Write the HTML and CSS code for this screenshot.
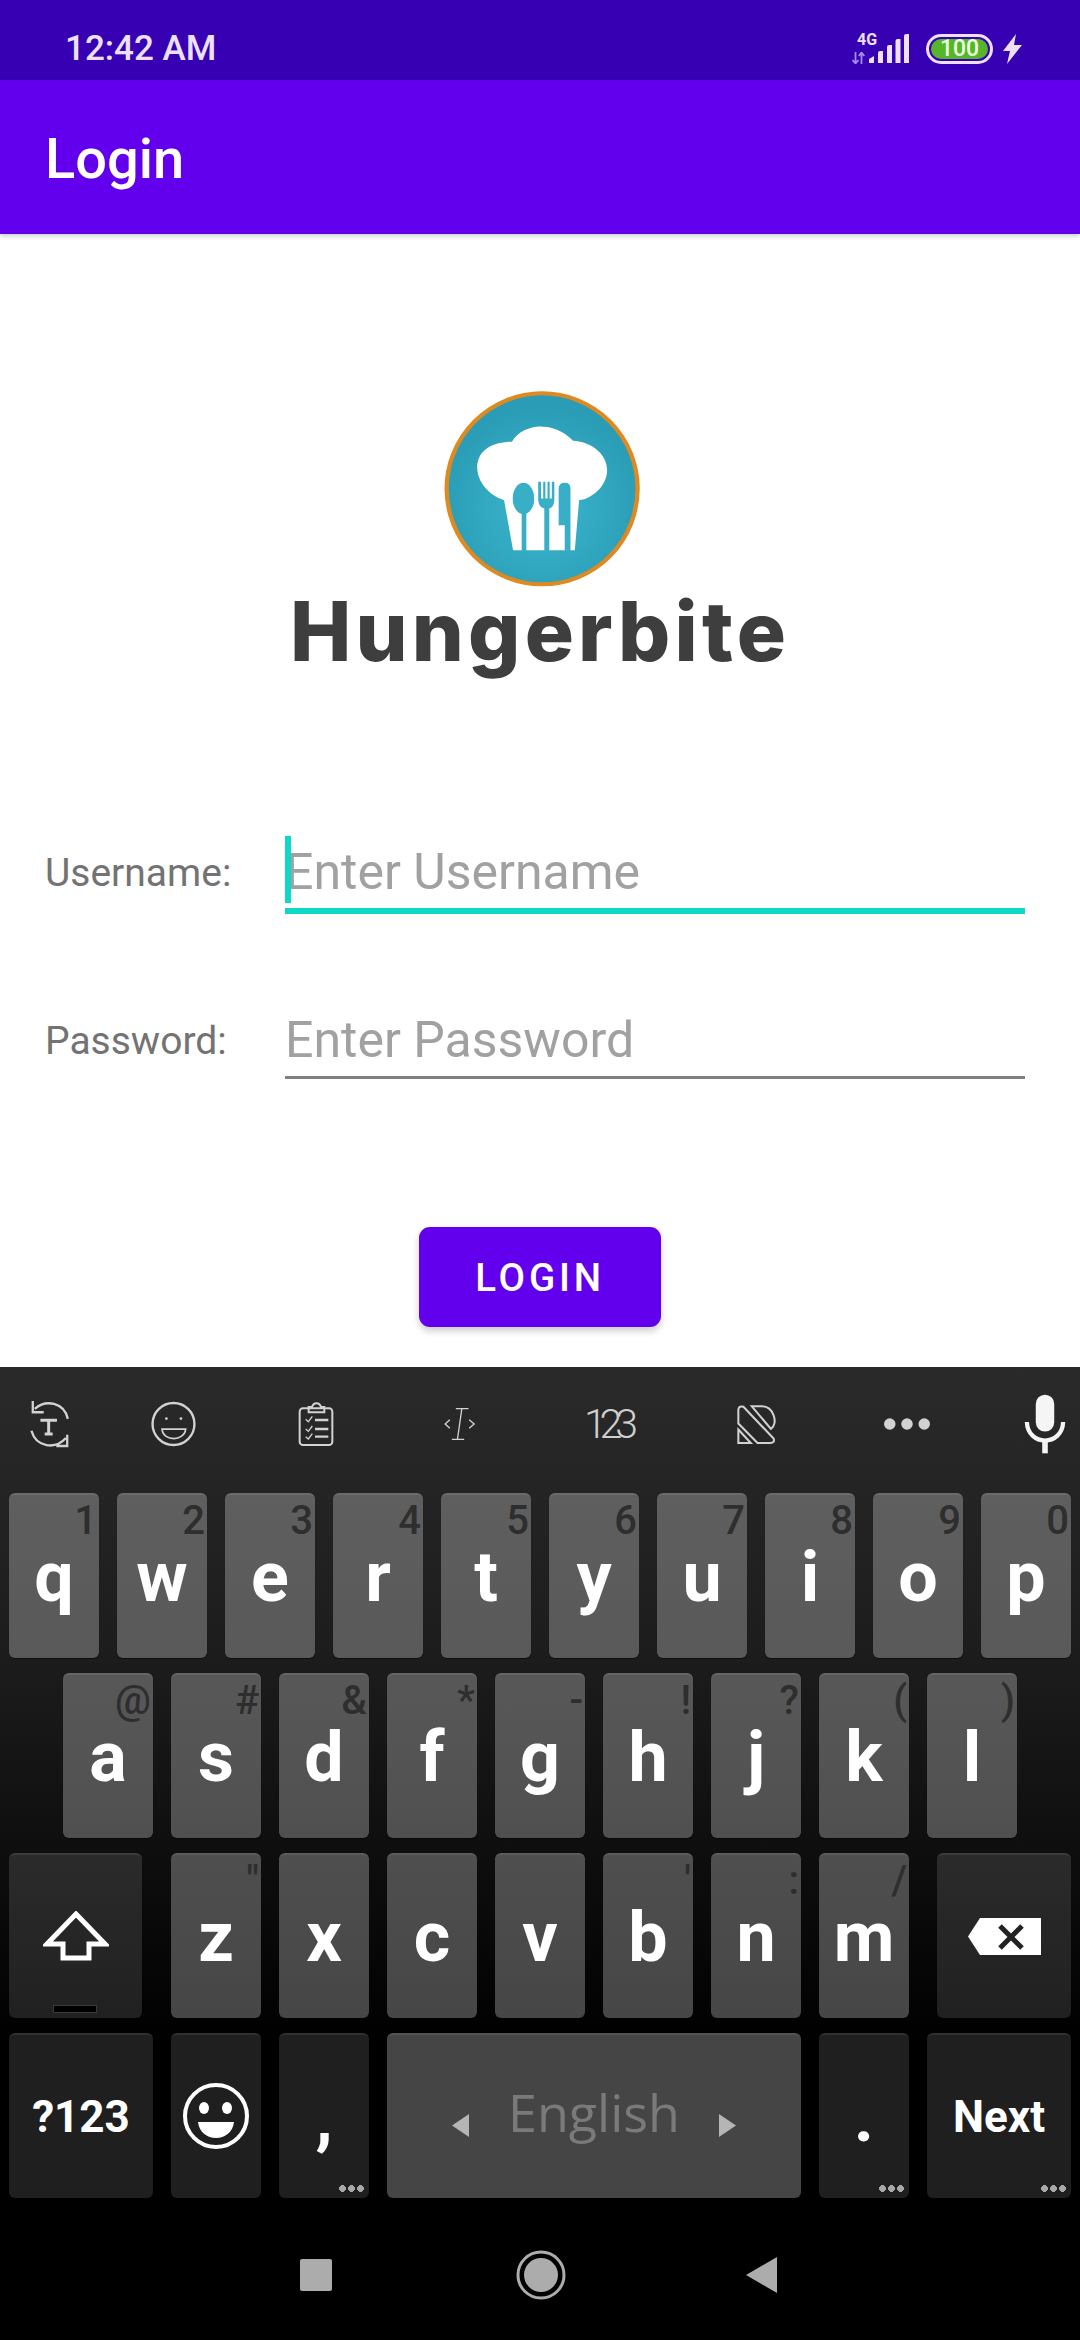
FILE: index.html
```html
<!DOCTYPE html>
<html>
<head>
    <title>Login</title>
    <meta name="viewport" content="width=device-width, initial-scale=1">
    <link rel="stylesheet" href="styles.css">
</head>
<body>
    <div class="screen">
        <div class="status-bar">
            <span class="clock">12:42 AM</span>
            <div class="status-icons">
                <div class="network">
                    <span class="net-type">4G</span>
                    <svg class="net-arrows" viewBox="0 0 13 12" width="13" height="12">
                        <path d="M3.5 0V11M0.5 8L3.5 11.5L6.5 8M9.5 12V1M6.8 4L9.5 .5L12.3 4" fill="none" stroke="#a68ae6" stroke-width="1.8"/>
                    </svg>
                </div>
                <svg class="signal" viewBox="0 0 40 30" width="40" height="30">
                    <path d="M0 29V25L5 22V29ZM9 29V19Q9 17 11 17H14V29ZM18 29V13Q18 11 20 11H23V29ZM26.500 29V7Q26.500 5 28.500 5H31.500V29ZM35 29V2Q35 0 37 0H40V29Z" fill="#ece0fb"/>
                </svg>
                <div class="battery"><span class="battery-level">100</span></div>
                <svg class="bolt" viewBox="0 0 19 30" width="19" height="30">
                    <path d="M13 0L0 17H7L4 30L19 11H11Z" fill="#ece0fb"/>
                </svg>
            </div>
        </div>

        <div class="app-bar">Login</div>

        <div class="content">
            <div class="logo">
                <svg class="logo-mark" viewBox="510 60 560 590" preserveAspectRatio="none" width="201" height="197">
                    <defs>
                        <radialGradient id="logoFill" cx="50%" cy="60%" r="55%">
                            <stop offset="0%" stop-color="#3cb7cf"/>
                            <stop offset="100%" stop-color="#2a9cb5"/>
                        </radialGradient>
                    </defs>
                    <ellipse cx="789" cy="356" rx="266" ry="286" fill="url(#logoFill)" stroke="#df8a20" stroke-width="12"/>
                    <path d="M708 540L683 390C640 375 608 335 608 290C610 240 650 215 705 215C720 180 770 165 790 170C830 170 860 195 875 212C930 215 970 255 970 300C970 345 930 385 892 390L880 540Z" fill="#fff"/>
                    <g fill="#38aec7">
                        <ellipse cx="737" cy="385" rx="30" ry="47"/>
                        <rect x="732" y="420" width="13" height="122"/>
                        <path d="M778 335H786V385H792V335H798V385H804V335H810V385H816V335H823V390Q822 410 809 415V542H795V415Q779 410 778 390Z"/>
                        <path d="M835 355Q836 338 852 338Q868 338 868 355V542H852V465H835Z"/>
                    </g>
                </svg>
                <span class="logo-name">Hungerbite</span>
            </div>

            <div class="form-row">
                <span class="form-label">Username:</span>
                <div class="field field-active">
                    <span class="caret"></span>
                    Enter Username
                </div>
            </div>
            <div class="form-row">
                <span class="form-label">Password:</span>
                <div class="field">Enter Password</div>
            </div>

            <button class="login-btn">LOGIN</button>
        </div>

        <div class="keyboard">
            <div class="toolbar">
                <svg viewBox="80 85 125 145" width="43" height="48" fill="none" stroke="#d2d2d2" stroke-width="7">
                    <path d="M198 142C186 92 132 82 98 112M92 88V122H125"/>
                    <path d="M88 178C102 228 160 236 192 200M196 190V224H163"/>
                    <path d="M115 146H165M140 146V188M128 188H152" stroke-width="9"/>
                </svg>
                <svg viewBox="432 92 138 142" width="47" height="48" fill="none" stroke="#d2d2d2">
                    <circle cx="501" cy="163" r="62" stroke-width="7"/>
                    <circle cx="480" cy="147" r="4" fill="#d2d2d2" stroke="none"/>
                    <circle cx="523" cy="147" r="4" fill="#d2d2d2" stroke="none"/>
                    <path d="M467 178H537C535 198 516 206 502 206C486 206 469 198 467 178Z" stroke-width="5"/>
                </svg>
                <svg viewBox="860 95 110 138" width="38" height="46" fill="none" stroke="#d2d2d2" stroke-width="6">
                    <rect x="866" y="117" width="98" height="110" rx="10"/>
                    <path d="M893 129V113H903C908 98 925 98 930 113H940V129Z"/>
                    <path d="M884 150L892 157L904 141M884 179L892 186L904 170M884 202L892 209L904 193" stroke-width="4"/>
                    <path d="M912 152H952M912 179H952M912 202H952" stroke-width="7"/>
                </svg>
                <svg viewBox="1283 112 96 102" width="33" height="34" fill="none" stroke="#d2d2d2" stroke-width="4">
                    <path d="M1338 117L1325 208M1320 117H1358M1308 209H1345M1302 150L1288 163L1302 176M1360 150L1375 163L1360 176"/>
                </svg>
                <span class="tool-text">123</span>
                <svg viewBox="568 102 122 122" width="41" height="41" fill="none" stroke="#d2d2d2" stroke-width="6">
                    <path d="M575 125Q573 106 590 110L680 205Q684 218 670 218H632L575 160Z"/>
                    <path d="M575 178L612 218H575Z"/>
                    <path d="M615 109H645C680 109 695 160 672 176Z"/>
                </svg>
                <svg viewBox="990 140 148 46" width="50" height="16" fill="#d2d2d2">
                    <circle cx="1013" cy="163" r="17"/>
                    <circle cx="1064" cy="163" r="17"/>
                    <circle cx="1115" cy="163" r="17"/>
                </svg>
                <svg class="tool-mic" viewBox="1400 68 132 182" width="44" height="60">
                    <rect x="1438" y="70" width="56" height="112" rx="28" fill="#f5f5f5"/>
                    <path d="M1411 153C1414 228 1518 228 1521 153" fill="none" stroke="#f5f5f5" stroke-width="13"/>
                    <path d="M1466 208V248" stroke="#f5f5f5" stroke-width="17"/>
                </svg>
            </div>

            <div class="key-row">
                <div class="key">q<span class="hint">1</span></div>
                <div class="key">w<span class="hint">2</span></div>
                <div class="key">e<span class="hint">3</span></div>
                <div class="key">r<span class="hint">4</span></div>
                <div class="key">t<span class="hint">5</span></div>
                <div class="key">y<span class="hint">6</span></div>
                <div class="key">u<span class="hint">7</span></div>
                <div class="key">i<span class="hint">8</span></div>
                <div class="key">o<span class="hint">9</span></div>
                <div class="key">p<span class="hint">0</span></div>
            </div>
            <div class="key-row key-row-middle">
                <div class="key">a<span class="hint">@</span></div>
                <div class="key">s<span class="hint">#</span></div>
                <div class="key">d<span class="hint">&amp;</span></div>
                <div class="key">f<span class="hint">*</span></div>
                <div class="key">g<span class="hint">-</span></div>
                <div class="key">h<span class="hint">!</span></div>
                <div class="key">j<span class="hint">?</span></div>
                <div class="key">k<span class="hint">(</span></div>
                <div class="key">l<span class="hint">)</span></div>
            </div>
            <div class="key-row">
                <div class="key key-dark key-shift">
                    <svg viewBox="0 0 66 50" width="66" height="50">
                        <path d="M33 3L62 33H46V47H20V33H4Z" fill="none" stroke="#fff" stroke-width="5"/>
                    </svg>
                    <span class="shift-bar"></span>
                </div>
                <div class="key">z<span class="hint">"</span></div>
                <div class="key">x</div>
                <div class="key">c</div>
                <div class="key">v</div>
                <div class="key">b<span class="hint">'</span></div>
                <div class="key">n<span class="hint">:</span></div>
                <div class="key">m<span class="hint">/</span></div>
                <div class="key key-dark key-delete">
                    <svg viewBox="0 0 73 37" width="73" height="37">
                        <path d="M12 0H73V37H12L0 18.500Z" fill="#fff"/>
                        <path d="M32 8L54 30M54 8L32 30" stroke="#222" stroke-width="5"/>
                    </svg>
                </div>
            </div>
            <div class="key-row">
                <div class="key key-dark key-wide key-label">?123</div>
                <div class="key key-dark key-icon">
                    <svg viewBox="0 0 68 68" width="68" height="68" fill="none" stroke="#fff">
                        <circle cx="34" cy="34" r="31" stroke-width="4"/>
                        <ellipse cx="22" cy="26" rx="5" ry="6" fill="#fff" stroke="none"/>
                        <ellipse cx="45" cy="26" rx="5" ry="6" fill="#fff" stroke="none"/>
                        <path d="M16 40H52C51 50 43 56 34 56C25 56 17 50 16 40Z" fill="#fff" stroke="none"/>
                    </svg>
                </div>
                <div class="key key-dark key-more">,</div>
                <div class="key key-space">
                    <svg class="space-arrow" viewBox="0 0 17 23" width="17" height="23"><path d="M17 0V23L0 11.500Z" fill="#b5b5b5"/></svg>
                    <span class="space-label">English</span>
                    <svg class="space-arrow" viewBox="0 0 17 23" width="17" height="23"><path d="M0 0V23L17 11.500Z" fill="#b5b5b5"/></svg>
                </div>
                <div class="key key-dark key-more">.</div>
                <div class="key key-dark key-wide key-label key-more">Next</div>
            </div>

            <div class="nav-bar">
                <svg class="nav-recent" viewBox="0 0 32 32" width="32" height="32"><rect width="32" height="32" rx="2" fill="#acacac"/></svg>
                <svg viewBox="0 0 50 50" width="50" height="50" fill="#acacac">
                    <circle cx="25" cy="25" r="23" fill="none" stroke="#acacac" stroke-width="3"/>
                    <circle cx="25" cy="25" r="17"/>
                </svg>
                <svg class="nav-back" viewBox="0 0 31 36" width="31" height="36"><path d="M31 0V36L0 18Z" fill="#acacac"/></svg>
            </div>
        </div>
    </div>
</body>
</html>
```

FILE: styles.css
```css
body {
    margin: 0;
    background: white;
    font-family: Roboto, sans-serif;
}
.screen {
    width: 1080px;
    height: 2340px;
    overflow: hidden;
    display: flex;
    flex-direction: column;
}

/* status bar */
.status-bar {
    height: 80px;
    flex-shrink: 0;
    background: #3700b3;
    display: flex;
    align-items: center;
    padding: 17px 58px 0 65px;
    box-sizing: border-box;
    color: #ece0fb;
}
.clock {
    font-size: 35px;
    font-weight: 500;
}
.status-icons {
    margin-left: auto;
    display: flex;
    align-items: flex-end;
    height: 30px;
}
.network {
    width: 17px;
    height: 30px;
    position: relative;
}
.net-type {
    position: absolute;
    left: 5px;
    top: -4px;
    font-size: 16px;
    font-weight: 700;
}
.net-arrows {
    position: absolute;
    left: 0;
    bottom: 0;
}
.signal {
    margin-right: 17px;
}
.battery {
    width: 67px;
    height: 30px;
    box-sizing: border-box;
    border: 3px solid #ece0fb;
    border-radius: 15px;
    padding: 2px;
    margin-right: 10px;
}
.battery-level {
    display: block;
    height: 20px;
    line-height: 20px;
    border-radius: 10px;
    background: #57b52c;
    color: #eaffdc;
    font-size: 23px;
    font-weight: 500;
    text-align: center;
}

/* app bar */
.app-bar {
    height: 154px;
    flex-shrink: 0;
    background: #6200ee;
    color: white;
    font-size: 56px;
    font-weight: 500;
    line-height: 159px;
    padding-left: 45px;
    box-shadow: 0 2px 5px rgba(0,0,0,0.2);
    position: relative;
}

/* login form */
.content {
    height: 1133px;
    flex-shrink: 0;
    box-sizing: border-box;
    padding-top: 156px;
}
.logo {
    height: 446px;
    display: flex;
    flex-direction: column;
    align-items: center;
}
.logo-mark {
    margin-left: 4px;
    filter: blur(0.6px);
}
.logo-name {
    font-family: Inter, sans-serif;
    font-size: 82px;
    font-weight: 800;
    line-height: 90px;
    letter-spacing: 4.200px;
    color: #3e3e3e;
    filter: blur(0.7px);
}
.form-row {
    display: flex;
    margin-bottom: 90px;
    padding-left: 45px;
}
.form-label {
    width: 240px;
    font-size: 39px;
    line-height: 74px;
    color: #737373;
}
.field {
    width: 740px;
    height: 75px;
    box-sizing: border-box;
    border-bottom: 3px solid #808080;
    font-size: 50px;
    line-height: 72px;
    color: #a1a1a1;
    position: relative;
}
.field-active {
    height: 78px;
    border-bottom: 6px solid #10d8c6;
}
.caret {
    position: absolute;
    left: 0;
    top: 0;
    width: 6px;
    height: 67px;
    background: #10d8c6;
}
.login-btn {
    display: block;
    width: 242px;
    height: 100px;
    margin: 148px auto 0;
    background: #6200ee;
    color: white;
    border: none;
    border-radius: 11px;
    font-family: Roboto, sans-serif;
    font-size: 38.5px;
    font-weight: 500;
    letter-spacing: 3.800px;
    box-shadow: 0 4px 7px rgba(0,0,0,0.2);
}

/* keyboard */
.keyboard {
    flex: 1;
    background: linear-gradient(#2a2a2a 0%, #1c1c1c 30%, #000 70%);
}
.toolbar {
    height: 126px;
    box-sizing: border-box;
    padding-bottom: 12px;
    display: grid;
    grid-template-columns: 98px 150px 135px 152px 145px 153px 147px 100px;
    align-items: center;
    justify-items: center;
}
.tool-text {
    font-family: Roboto, sans-serif;
    font-size: 41px;
    font-weight: 300;
    letter-spacing: -7px;
    color: #cfcfcf;
}
.tool-mic {
    justify-self: end;
    margin-right: 13px;
}
.key-row {
    display: flex;
    gap: 18px;
    padding-left: 9px;
    margin-bottom: 15px;
}
.key-row-middle {
    padding-left: 63px;
}
.key {
    width: 90px;
    height: 165px;
    flex-shrink: 0;
    box-sizing: border-box;
    position: relative;
    border-radius: 6px;
    border-top: 2px solid rgba(255,255,255,0.08);
    background: rgba(255,255,255,0.27);
    box-shadow: 0 1px 1px rgba(0,0,0,0.5);
    color: white;
    font-size: 70px;
    font-weight: 700;
    line-height: 82px;
    padding-top: 41px;
    text-align: center;
}
.hint {
    position: absolute;
    top: 2px;
    right: 2px;
    font-size: 40px;
    font-weight: 500;
    line-height: 47px;
    color: #2e2e2e;
}
.key-dark {
    background: rgba(255,255,255,0.12);
}
.key-shift {
    width: 133px;
    margin-right: 11px;
    padding-top: 56px;
}
.key-shift svg, .key-delete svg, .key-icon svg {
    display: block;
    margin: 0 auto;
}
.shift-bar {
    position: absolute;
    left: 45px;
    bottom: 6px;
    width: 42px;
    height: 6px;
    background: #000;
    box-shadow: 0 0 0 1px #3a3a3a;
}
.key-delete {
    width: 134px;
    margin-left: 10px;
    padding-top: 63px;
}
.key-icon {
    padding-top: 47px;
}
.key-wide {
    width: 144px;
}
.key-label {
    font-size: 44px;
    font-weight: 700;
    line-height: 53px;
    padding-top: 56px;
}
.key-more::after {
    content: "";
    position: absolute;
    right: 4px;
    bottom: 6px;
    width: 27px;
    height: 7px;
    background: radial-gradient(circle 3.5px at center, #a8a8a8 90%, transparent 100%) 0 0 / 9px 7px repeat-x;
}
.key-space {
    width: 414px;
    padding-top: 0;
    display: flex;
    align-items: center;
    justify-content: center;
    gap: 39px;
}
.space-label {
    font-family: "Open Sans", sans-serif;
    font-size: 52px;
    font-weight: 400;
    line-height: 60px;
    margin-top: -9px;
    color: #7a7a7a;
}
.space-arrow {
    margin-top: 17px;
}
.nav-bar {
    height: 142px;
    box-sizing: border-box;
    margin-top: -15px;
    padding: 12px 4px 0 0;
    display: flex;
    align-items: center;
    justify-content: center;
    gap: 182px;
}
.nav-recent {
    margin-right: 2px;
}
.nav-back {
    margin-left: -2px;
}
```
